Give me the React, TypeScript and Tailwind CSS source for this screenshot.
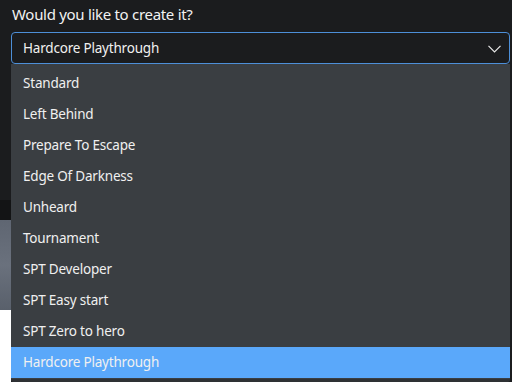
const presets = [
  "Standard",
  "Left Behind",
  "Prepare To Escape",
  "Edge Of Darkness",
  "Unheard",
  "Tournament",
  "SPT Developer",
  "SPT Easy start",
  "SPT Zero to hero",
  "Hardcore Playthrough",
];

const selected = "Hardcore Playthrough";

const App = () => {
  return (
    <div
      className="w-[512px] h-[382px] bg-[#1b1c1e] flex overflow-hidden text-white"
      style={{ fontFamily: '"Noto Sans", "Open Sans", sans-serif' }}
    >
      <div className="w-[11px] flex flex-col shrink-0">
        <div className="h-[200px] bg-[#1b1c1e]" />
        <div className="h-[20px] bg-[#131415]" />
        <div className="h-[90px] bg-gradient-to-b from-[#5f6672] via-[#6a717d] to-[#59606b]" />
        <div className="flex-1 bg-white" />
      </div>

      <div className="flex-1 flex flex-col pr-[2px]">
        <h2 className="h-[32px] pt-[3px] pl-[1px] text-[15px] leading-[22px] tracking-[-0.3px] text-[#f2f2f2]">
          Would you like to create it?
        </h2>

        <div className="h-[32px] flex items-center justify-between rounded-[4px] border border-[#4d8fd8] bg-[#1b1c1e] pl-[11px] pr-[8px]">
          <span className="text-[13.5px] tracking-[-0.2px] text-[#f0f0f0]">{selected}</span>
          <svg width="13" height="8" viewBox="0 0 13 8" fill="none" className="mt-[2px]">
            <polyline points="0.5,0.8 6.5,6.8 12.5,0.8" stroke="#e8e8e8" strokeWidth="1.2" />
          </svg>
        </div>

        <ul className="flex-1 bg-[#3a3e42] pt-[4px] border-b-[3px] border-[#2e3134] rounded-b-[2px]">
          {presets.map((name) => (
            <li
              key={name}
              className={`h-[31px] flex items-center pl-[12px] text-[13.5px] tracking-[-0.2px] text-[#f0f0f0] ${
                name === selected ? "bg-[#5aa8fa]" : ""
              }`}
            >
              {name}
            </li>
          ))}
        </ul>
      </div>
    </div>
  );
};

export default App;
